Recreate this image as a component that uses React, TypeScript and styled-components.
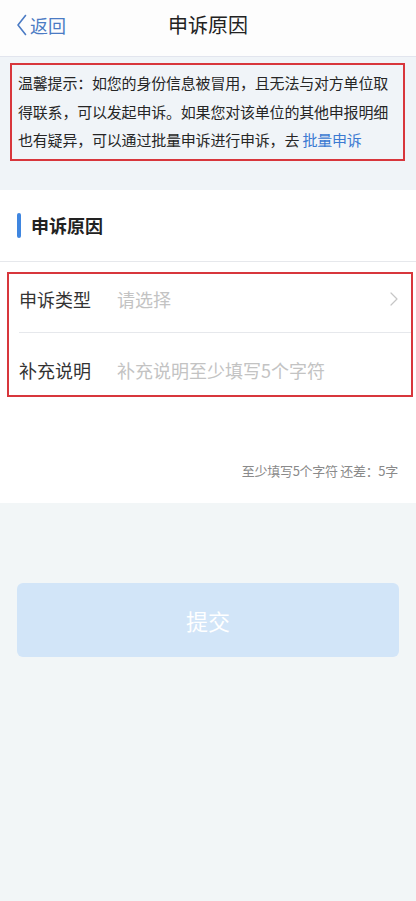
import styled, { createGlobalStyle } from "styled-components";

const GlobalStyle = createGlobalStyle`
  body {
    margin: 0;
    background: #f2f6f7;
    font-family: "Noto Sans CJK SC", "Noto Sans", sans-serif;
    color: #333;
  }
`;

const App = () => {
    return (
        <>
            <GlobalStyle />
            <Page>
                <NavBar>
                    <BackLink>
                        <svg width="11" height="22" viewBox="0 0 11 22">
                            <path d="M9.5 1.5 L2 11 L9.5 20.5" fill="none" stroke="#4b7bc4" strokeWidth="1.6" strokeLinecap="round" strokeLinejoin="round" />
                        </svg>
                        <span>返回</span>
                    </BackLink>
                    <NavTitle>申诉原因</NavTitle>
                    <span />
                </NavBar>

                <TipArea>
                    <TipBox>
                        温馨提示：如您的身份信息被冒用，且无法与对方单位取
                        <br />
                        得联系，可以发起申诉。如果您对该单位的其他申报明细
                        <br />
                        也有疑异，可以通过批量申诉进行申诉，去 <TipLink>批量申诉</TipLink>
                    </TipBox>
                </TipArea>

                <Section>
                    <SectionHeader>
                        <HeaderBar />
                        <HeaderTitle>申诉原因</HeaderTitle>
                    </SectionHeader>

                    <FieldGroup>
                        <FieldRow $height={59} $shift={-4} $divider>
                            <FieldLabel>申诉类型</FieldLabel>
                            <FieldValue>请选择</FieldValue>
                            <svg width="8" height="14" viewBox="0 0 8 14">
                                <path d="M1 1 L7 7 L1 13" fill="none" stroke="#c6c6c6" strokeWidth="1.2" strokeLinecap="round" strokeLinejoin="round" />
                            </svg>
                        </FieldRow>
                        <FieldRow $height={62} $shift={6}>
                            <FieldLabel>补充说明</FieldLabel>
                            <FieldValue>补充说明至少填写5个字符</FieldValue>
                        </FieldRow>
                    </FieldGroup>

                    <Counter>至少填写5个字符 还差：5字</Counter>
                </Section>

                <SubmitButton disabled>提交</SubmitButton>
            </Page>
        </>
    );
};

export default App;

const Page = styled.div`
  min-height: 901px;
  background: #f2f6f7;
`;

const NavBar = styled.div`
  height: 57px;
  background: #fdfdfd;
  border-bottom: 1px solid #e2e5ee;
  display: grid;
  grid-template-columns: 1fr auto 1fr;
  align-items: center;
  padding: 0 16px;
  box-sizing: border-box;
`;

const BackLink = styled.div`
  display: flex;
  align-items: center;
  gap: 3px;
  color: #4b7bc4;
  font-size: 18px;
  margin-top: -7px;

  svg {
    flex-shrink: 0;
  }
`;

const NavTitle = styled.div`
  font-size: 20px;
  color: #222;
  margin-top: -7px;
`;

const TipArea = styled.div`
  padding: 6px 11px 29px 10px;
  background: #f0f4f8;
`;

const TipBox = styled.div`
  border: 2px solid #d8363c;
  padding: 4px 6px 4px 6px;
  font-size: 15px;
  letter-spacing: -0.2px;
  line-height: 28.5px;
  color: #262626;
  white-space: nowrap;
`;

const TipLink = styled.span`
  color: #3b7ad2;
`;

const Section = styled.div`
  background: #fff;
  height: 313px;
`;

const SectionHeader = styled.div`
  height: 71px;
  border-bottom: 1px solid #e6e8ec;
  display: flex;
  align-items: center;
  padding-left: 17px;
  gap: 10px;
`;

const HeaderBar = styled.div`
  width: 4px;
  height: 25px;
  border-radius: 2px;
  background: #3f86e0;
`;

const HeaderTitle = styled.div`
  font-size: 18px;
  font-weight: 700;
  color: #222;
`;

const FieldGroup = styled.div`
  margin: 10px 3px 0 7px;
  border: 2px solid #d8363c;
`;

const FieldRow = styled.div<{ $height: number; $shift: number; $divider?: boolean }>`
  height: ${(p) => p.$height}px;
  margin-left: 10px;
  padding-right: 13px;
  display: flex;
  align-items: center;
  border-bottom: ${(p) => (p.$divider ? "1px solid #e6e8ec" : "none")};
  box-sizing: border-box;

  & > * {
    position: relative;
    top: ${(p) => p.$shift}px;
  }
`;

const FieldLabel = styled.div`
  width: 98px;
  font-size: 18px;
  color: #333;
`;

const FieldValue = styled.div`
  flex: 1;
  font-size: 18px;
  color: #c3c3c3;
`;

const Counter = styled.div`
  text-align: right;
  padding: 64px 18px 0 0;
  font-size: 13px;
  letter-spacing: -0.3px;
  color: #8a8a8a;
`;

const SubmitButton = styled.button`
  display: block;
  width: calc(100% - 34px);
  margin: 80px 17px 0;
  height: 74px;
  border: none;
  border-radius: 6px;
  background: #d2e5f8;
  color: #fff;
  font-family: "Noto Sans CJK SC", sans-serif;
  font-size: 22px;
`;
